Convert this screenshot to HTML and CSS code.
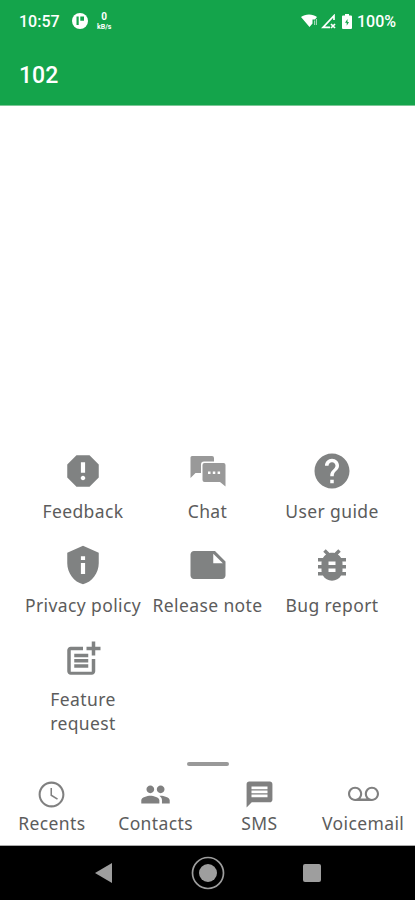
FILE: index.html
```html
<!DOCTYPE html>
<html lang="en">
<head>
    <meta charset="UTF-8">
    <meta name="viewport" content="width=device-width, initial-scale=1.0">
    <title>102</title>
    <link rel="stylesheet" href="styles.css">
</head>
<body>
    <div class="phone">
        <header class="header">
            <div class="status">
                <span class="time">10:57</span>
                <svg class="app-badge" viewBox="0 0 16 16"><circle cx="8" cy="8" r="8" fill="#fff"/><path d="M4.500 3.500h2.200v8.500H4.500zM8.300 3.500h3.700v4.300H8.300z" fill="#14a44b"/></svg>
                <span class="speed"><b>0</b><small>kB/s</small></span>
                <span class="status-right">
                    <svg width="17" height="14" viewBox="0 0 17 14"><path d="M0 3C4-.5 12-.5 16 3l-2 2.500h-2.500v4L8.500 13z" fill="#fff"/><path d="M13 6.500h1.200V11H13zM15 5h1v6h-1z" fill="#fff" opacity=".6"/></svg>
                    <svg width="15" height="15" viewBox="0 0 15 15"><path d="M13 6V1.700L2 13.300h7" fill="none" stroke="#fff" stroke-width="1.700"/><path d="M10 10l4 4M14 10l-4 4" stroke="#fff" stroke-width="1.700"/></svg>
                    <svg class="battery" width="10" height="15" viewBox="0 0 10 15"><path d="M3 0h4v1.500h2q1 0 1 1V14q0 1-1 1H1q-1 0-1-1V2.500q0-1 1-1h2z" fill="#fff"/><path d="M5.500 5L3 8.700H4.700v3L7 8H5.500z" fill="#14a44b"/></svg>
                    <span>100%</span>
                </span>
            </div>
            <h1 class="title">102</h1>
        </header>

        <main class="content">
            <div class="menu">
                <div class="item">
                    <svg class="icon" viewBox="0 0 24 24"><path d="M15.730 3H8.270L3 8.270v7.460L8.270 21h7.460L21 15.730V8.270L15.730 3zM12 17.300c-.72 0-1.300-.58-1.300-1.300s.58-1.300 1.300-1.300 1.300.58 1.300 1.300-.58 1.300-1.300 1.300zm1.200-4.300h-2.400V7h2.400v6z"/></svg>
                    <span class="label">Feedback</span>
                </div>
                <div class="item">
                    <svg class="icon chat" viewBox="0 0 42 42"><path d="M5 6h20q2 0 2 2v3.500H17q-3 0-3 3V23H8.500L3.500 28V7.500Q3.500 6 5 6z"/><path d="M17.500 13h19q2 0 2 2v21.500L33 32H17.500q-2 0-2-2V15q0-2 2-2z"/><path class="dots" d="M21 21.500h2.500v2.500H21zM25.800 21.500h2.500v2.500h-2.500zM30.600 21.500h2.500v2.500h-2.500z"/></svg>
                    <span class="label">Chat</span>
                </div>
                <div class="item">
                    <svg class="icon" viewBox="0 0 24 24"><path d="M12 2C6.480 2 2 6.480 2 12s4.480 10 10 10 10-4.480 10-10S17.520 2 12 2zm1 17h-2v-2h2v2zm2.070-7.750l-.9.920C13.450 12.900 13 13.500 13 15h-2v-.5c0-1.100.45-2.100 1.170-2.830l1.240-1.260c.37-.36.59-.86.59-1.410 0-1.100-.9-2-2-2s-2 .9-2 2H8c0-2.210 1.790-4 4-4s4 1.790 4 4c0 .88-.36 1.680-.93 2.250z"/></svg>
                    <span class="label">User guide</span>
                </div>
                <div class="item">
                    <svg class="icon" viewBox="0 0 24 24"><path d="M12 1L3 5v6c0 5.550 3.840 10.740 9 12 5.160-1.260 9-6.450 9-12V5l-9-4zm1.200 16.200h-2.400v-6.400h2.400v6.400zm0-8h-2.400V7h2.400v2.200z"/></svg>
                    <span class="label">Privacy policy</span>
                </div>
                <div class="item">
                    <svg class="icon" viewBox="0 0 24 24"><path d="M22 10l-6-6H4c-1.100 0-2 .9-2 2v12.010c0 1.100.9 1.990 2 1.990l16-.01c1.100 0 2-.89 2-1.990v-8zm-7-4.500l5.500 5.500H15V5.500z"/></svg>
                    <span class="label">Release note</span>
                </div>
                <div class="item">
                    <svg class="icon" viewBox="0 0 24 24"><path d="M20 8h-2.810c-.45-.78-1.070-1.450-1.820-1.960L17 4.410 15.590 3l-2.170 2.170C12.960 5.060 12.490 5 12 5s-.96.060-1.410.17L8.410 3 7 4.410l1.620 1.630C7.880 6.550 7.260 7.220 6.810 8H4v2h2.090c-.05.33-.09.66-.09 1v1H4v2h2v1c0 .34.04.67.09 1H4v2h2.810c1.040 1.790 2.970 3 5.190 3s4.150-1.210 5.190-3H20v-2h-2.090c.05-.33.09-.66.09-1v-1h2v-2h-2v-1c0-.34-.04-.67-.09-1H20V8zm-6 8h-4v-2h4v2zm0-4h-4v-2h4v2z"/></svg>
                    <span class="label">Bug report</span>
                </div>
                <div class="item">
                    <svg class="icon" viewBox="0 0 24 24"><path d="M17 19.220H5V7h7V5H5c-1.100 0-2 .9-2 2v12c0 1.100.9 2 2 2h12c1.100 0 2-.9 2-2v-7h-2v7.220z"/><path d="M19 2h-2v3h-3v2h3v2.990h2V7h3V5h-3V2zM7 9h8v2H7zM7 12v2h8v-2H7zM7 15h8v2H7z"/></svg>
                    <span class="label">Feature request</span>
                </div>
            </div>
            <div class="handle"></div>
        </main>

        <nav class="tabs">
            <div class="tab">
                <svg class="tab-icon" viewBox="0 0 24 24"><path d="M12 2C6.500 2 2 6.500 2 12s4.500 10 10 10 10-4.500 10-10S17.500 2 12 2zm0 18.400c-4.640 0-8.400-3.760-8.400-8.400S7.360 3.600 12 3.600s8.400 3.760 8.400 8.400-3.760 8.400-8.400 8.400z"/><path d="M12.400 7H11.200v6l5.100 3.100.7-1.100-4.600-2.800z"/></svg>
                <span class="label">Recents</span>
            </div>
            <div class="tab">
                <svg class="tab-icon" viewBox="0 0 24 24"><path d="M16 11c1.660 0 2.990-1.340 2.990-3S17.660 5 16 5s-3 1.340-3 3 1.340 3 3 3zm-8 0c1.660 0 2.990-1.340 2.990-3S9.660 5 8 5 5 6.340 5 8s1.340 3 3 3zm0 2c-2.330 0-7 1.170-7 3.500V19h14v-2.500c0-2.330-4.670-3.500-7-3.500zm8 0c-.29 0-.62.020-.97.050 1.160.84 1.970 1.970 1.970 3.450V19h6v-2.500c0-2.330-4.670-3.500-7-3.500z"/></svg>
                <span class="label">Contacts</span>
            </div>
            <div class="tab">
                <svg class="tab-icon" viewBox="0 0 24 24" fill-rule="evenodd"><path d="M4 2c-1.100 0-2 .9-2 2v18l4-4h14c1.100 0 2-.9 2-2V4c0-1.100-.9-2-2-2H4zm1.800 3.800h12.400v2.200H5.800zm0 3.100h12.400v2.200H5.800zm0 3.100h12.400v2.200H5.800z"/></svg>
                <span class="label">SMS</span>
            </div>
            <div class="tab">
                <svg class="tab-icon" viewBox="0 0 24 24" fill-rule="evenodd"><path d="M18.500 6C15.460 6 13 8.460 13 11.500c0 1.330.47 2.550 1.260 3.500H9.740c.79-.95 1.260-2.170 1.260-3.500C11 8.460 8.540 6 5.500 6S0 8.460 0 11.500 2.460 17 5.500 17h13c3.040 0 5.500-2.460 5.500-5.500S21.540 6 18.500 6zm-13 9.400a3.900 3.900 0 1 1 0-7.800 3.900 3.900 0 0 1 0 7.800zm13 0a3.900 3.900 0 1 1 0-7.800 3.900 3.900 0 0 1 0 7.800z"/></svg>
                <span class="label">Voicemail</span>
            </div>
        </nav>

        <footer class="system-bar">
            <svg width="18" height="20" viewBox="0 0 18 20"><path d="M17 0v20L0 10z" fill="#9e9e9e"/></svg>
            <svg width="34" height="34" viewBox="0 0 34 34"><circle cx="17" cy="17" r="15.500" fill="none" stroke="#9e9e9e" stroke-width="1.700"/><circle cx="17" cy="17" r="9" fill="#9e9e9e"/></svg>
            <span class="square"></span>
        </footer>
    </div>
</body>
</html>
```
FILE: styles.css
```css
* {
    box-sizing: border-box;
}
body {
    margin: 0;
    background-color: #fff;
    font-family: "Noto Sans", sans-serif;
}
.phone {
    display: flex;
    flex-direction: column;
    width: 415px;
    height: 900px;
    overflow: hidden;
}
.header {
    height: 106px;
    background-color: #14a44b;
    border-bottom: 1px solid #7cc797;
    color: #fff;
    font-family: Roboto, sans-serif;
}
.status {
    display: flex;
    align-items: center;
    height: 42px;
    padding: 0 19px;
    font-size: 16px;
    font-weight: 500;
}
.time {
    width: 53px;
}
.app-badge {
    width: 16px;
    height: 16px;
}
.speed {
    display: flex;
    flex-direction: column;
    align-items: center;
    margin-left: 9px;
}
.speed b {
    font-size: 10px;
    line-height: 12px;
}
.speed small {
    font-size: 7px;
    font-weight: 700;
    line-height: 9px;
}
.status-right {
    display: flex;
    align-items: center;
    gap: 3px;
    margin-left: auto;
}
.battery {
    margin: 0 2px 0 3px;
}
.title {
    margin: 18px 0 0 19px;
    font-size: 23px;
    font-weight: 500;
    line-height: 31px;
}
.content {
    display: flex;
    flex: 1;
    flex-direction: column;
    justify-content: flex-end;
    align-items: center;
}
.menu {
    display: grid;
    grid-template-columns: repeat(3, 124.5px);
    row-gap: 21px;
}
.item,
.tab {
    display: flex;
    flex-direction: column;
    align-items: center;
}
.icon {
    width: 42px;
    height: 42px;
    margin-bottom: 7px;
    fill: #808282;
}
.chat {
    fill: #999;
}
.dots {
    fill: #fff;
}
.label {
    color: #5c5c5c;
    font-size: 17.5px;
    letter-spacing: 0.4px;
    line-height: 24px;
    text-align: center;
}
.item .label {
    max-width: 122px;
}
.handle {
    width: 42px;
    height: 4px;
    margin: 27px 0 13px;
    border-radius: 2px;
    background-color: #999;
}
.tabs {
    display: grid;
    grid-template-columns: repeat(4, 1fr);
    height: 67px;
    border-bottom: 1px solid #aaa;
}
.tab-icon {
    width: 31px;
    height: 31px;
    fill: #808080;
}
.tab .label {
    line-height: 26px;
}
.system-bar {
    display: flex;
    justify-content: center;
    align-items: center;
    gap: 78px;
    height: 54px;
    background-color: #000;
}
.square {
    width: 18px;
    height: 18px;
    border-radius: 2px;
    background-color: #9e9e9e;
}
```
